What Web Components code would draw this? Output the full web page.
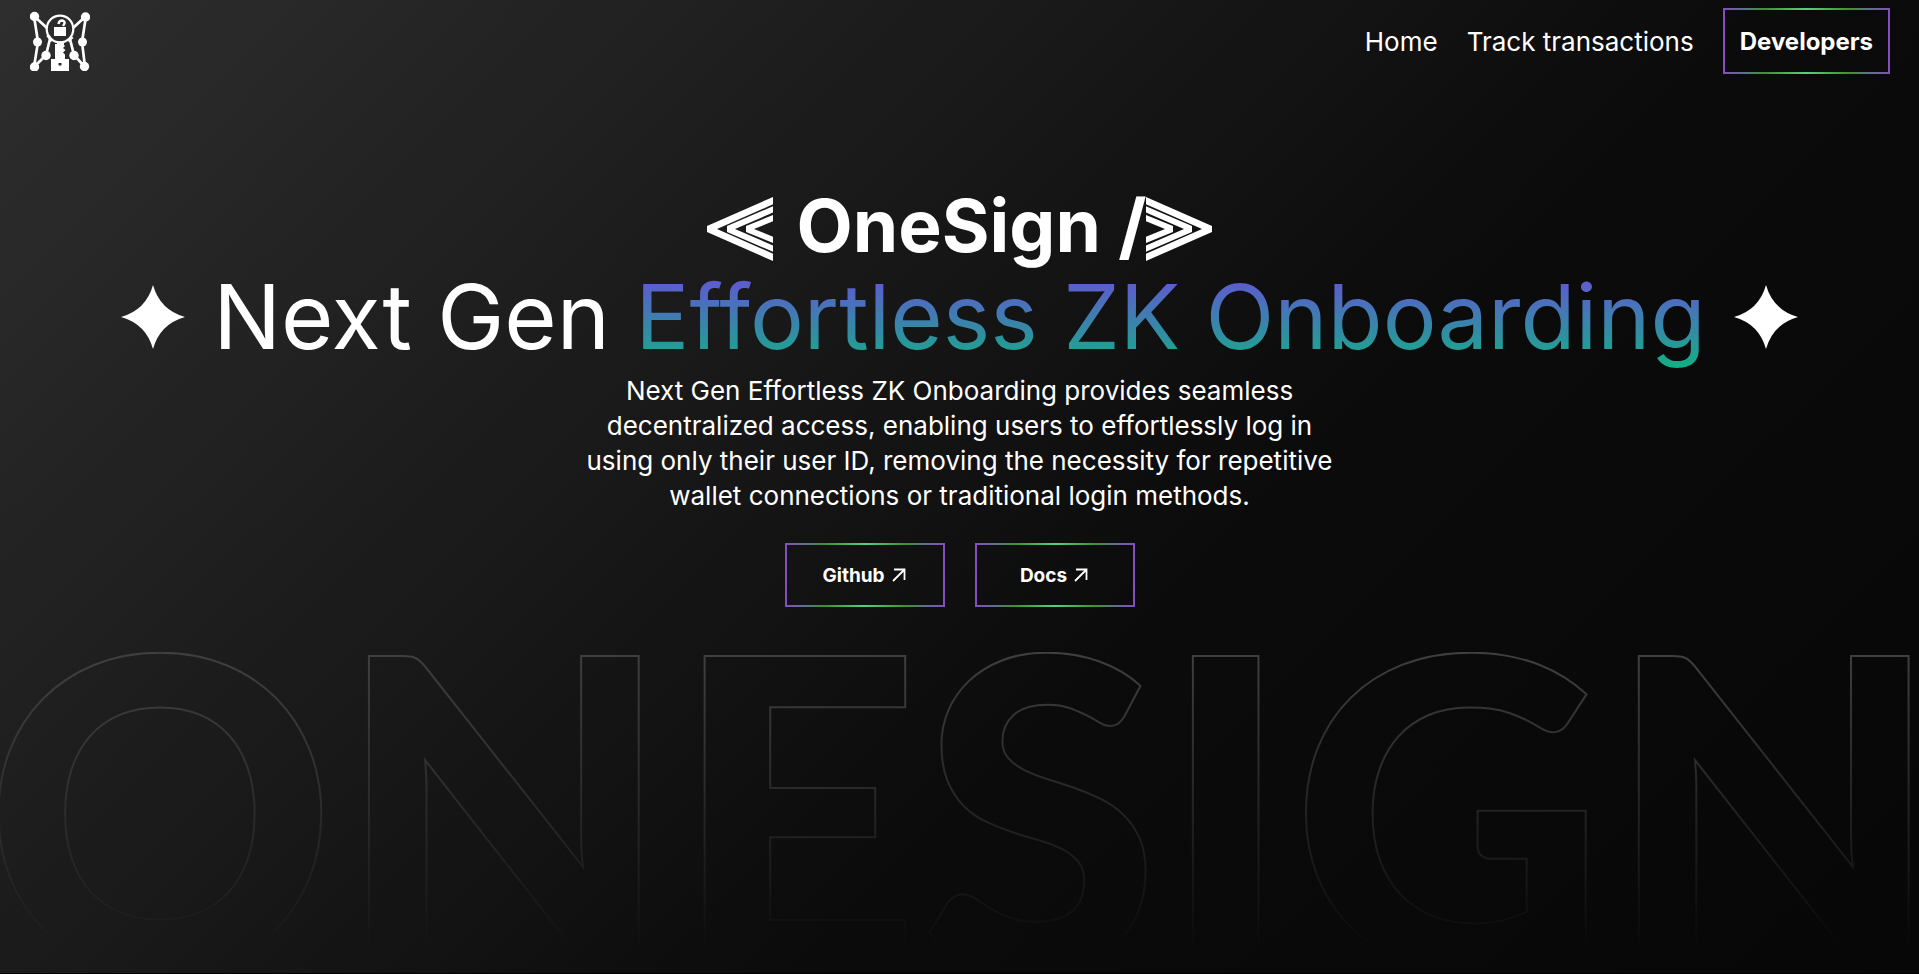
<!DOCTYPE html>
<html lang="en">
<head>
<meta charset="utf-8">
<meta name="viewport" content="width=device-width, initial-scale=1">
<title>OneSign</title>
<style>
html,body{margin:0;min-height:100%;background:#000}
body{color:#fff;font-family:Inter,"Open Sans",sans-serif}
</style>
</head>
<body>
<onesign-page></onesign-page>
<script>
const define = (name, html) => {
  const template = document.createElement('template');
  template.innerHTML = html;
  customElements.define(name, class extends HTMLElement {
    constructor() {
      super();
      this.attachShadow({ mode: 'open' }).append(template.content.cloneNode(true));
      const link = this.shadowRoot.querySelector('a[data-forward]');
      if (link) link.href = this.getAttribute('href') || '#';
    }
  });
};

define('site-logo', `
<style>:host{display:block}a{display:block}svg{display:block;width:60px;height:60px}</style>
<a href="#home" aria-label="OneSign home">
<svg viewBox="30 10 60 60" fill="#fff" stroke="#fff">
<g fill="none" stroke-width="3">
<path d="M34 15L47 27M34 15L38 41L34 66L46 54L50 38M86 15L73 27M86 15L82 41L85 66L74 54L70 38" stroke-width="2.700"/>
<circle cx="60" cy="28" r="13.300" stroke-width="2.200"/>
<path d="M47.500 34L52 40M72.500 36L68 40"/>
<path d="M58.500 23Q59 19.500 62 19.500Q65 20 64.500 22.500L63 25" stroke-width="2.400"/>
</g>
<g stroke="none">
<circle cx="34.500" cy="15.500" r="4.700"/><circle cx="85.500" cy="16" r="4.700"/>
<circle cx="37.500" cy="41" r="4.500"/><circle cx="82.500" cy="41" r="4.500"/>
<circle cx="46" cy="54.500" r="4.700"/><circle cx="74" cy="54.500" r="4.700"/>
<circle cx="34.500" cy="66" r="4.700"/><circle cx="84.500" cy="65.500" r="4.700"/>
<path d="M54 26h12v9H54z"/>
<path fill-rule="evenodd" d="M57 41.500L59 40.500H61L64 42V44L65 45L63 47L65.500 49L63 51.500L65 53.500V58H69V70H51V58H55V43H57ZM58.500 62V64.500H61.500V62Z"/>
</g></svg></a>`);

define('framed-link', `
<style>
:host{display:block}
a{display:flex;box-sizing:border-box;height:100%;align-items:center;justify-content:center;gap:6px;padding:0 15px;color:#fff;text-decoration:none;font-weight:700;
border:2px solid;border-image:linear-gradient(90deg,#864ebe 0%,#607090 12%,#40922f 25%,#53d186 50%,#40922f 75%,#607090 88%,#864ebe 100%) 1}
svg{display:none;width:16px;height:16px}
:host([external]) svg{display:block}
</style>
<a data-forward><slot></slot><svg viewBox="0 0 16 16" fill="none" stroke="#fff" stroke-width="1.800" aria-hidden="true"><path d="M2 14L13.500 2.500M3 2.500H13.500V13"/></svg></a>`);

define('site-header', `
<style>
:host{display:flex;align-items:center;justify-content:space-between;padding:8px 29px 0 30px}
nav{display:flex;align-items:center;gap:29px;font-size:24px}
nav>a{color:#fff;text-decoration:none;font-size:26px}
framed-link{height:66px}
</style>
<site-logo></site-logo>
<nav aria-label="Main"><a href="#home">Home</a><a href="#track">Track transactions</a><framed-link href="#developers">Developers</framed-link></nav>`);

define('chevron-mark', `
<style>:host{display:block;padding-top:6px}:host([flip]) svg{transform:scaleX(-1)}svg{display:block;width:66px;height:64px}</style>
<svg viewBox="0 0 66 66" preserveAspectRatio="none" fill="#fff" aria-hidden="true">
<path d="M66 0V7.500L10 33L66 58.500V66L0 36V30Z"/>
<path d="M66 9.500V16L28 33L66 50V56.500L20 36V30Z"/>
<path d="M66 18.500V25L47 33L66 41V47.500L39 36V30Z"/>
</svg>`);

define('spark-mark', `
<style>:host{display:block}svg{display:block;width:64px;height:64px}</style>
<svg viewBox="0 0 64 64" fill="#fff" aria-hidden="true"><path d="M32 0Q39 25 64 32Q39 39 32 64Q25 39 0 32Q25 25 32 0Z"/></svg>`);

define('hero-banner', `
<style>
:host{display:flex;flex-direction:column;align-items:center;text-align:center;padding-top:104px}
.brand,.headline{display:flex;align-items:center;justify-content:center;white-space:nowrap}
.brand{margin:0;font-size:73px;line-height:95px;font-weight:700}
.brand chevron-mark:first-child{margin-right:24px}
h1{margin:0;font-size:90px;line-height:88px;font-weight:400}
h1 span{background:linear-gradient(#6f48e0 0%,#12b084 96%);-webkit-background-clip:text;background-clip:text;color:transparent;padding-bottom:2px}
.headline{gap:28px}
.copy{margin:12px 0 0;font-size:26px;line-height:35px}
.actions{display:flex;gap:30px;margin-top:30px;font-size:19px}
.actions framed-link{width:160px;height:64px}
</style>
<p class="brand"><chevron-mark></chevron-mark>OneSign /<chevron-mark flip></chevron-mark></p>
<div class="headline"><spark-mark></spark-mark><h1>Next Gen <span>Effortless ZK Onboarding</span></h1><spark-mark></spark-mark></div>
<p class="copy">Next Gen Effortless ZK Onboarding provides seamless<br>decentralized access, enabling users to effortlessly log in<br>using only their user ID, removing the necessity for repetitive<br>wallet connections or traditional login methods.</p>
<div class="actions"><framed-link href="#github" external>Github</framed-link><framed-link href="#docs" external>Docs</framed-link></div>`);

define('outline-wordmark', `
<style>
:host{display:block;overflow:hidden;-webkit-mask-image:linear-gradient(#000,transparent 94%);mask-image:linear-gradient(#000,transparent 94%)}
div{margin-left:-16px;font-family:Lato,Inter,sans-serif;font-size:434px;line-height:302px;font-weight:900;white-space:nowrap;color:transparent;-webkit-text-stroke:2px #404040}
</style>
<div>ONESIGN</div>`);

define('onesign-page', `
<style>
:host{display:flex;flex-direction:column;box-sizing:border-box;min-height:calc(100vh - 1px);background:linear-gradient(135deg,#2e2e2e 0%,#0b0b0b 61%,#070707 100%)}
outline-wordmark{margin-top:45px;height:321px}
</style>
<site-header></site-header>
<main><hero-banner></hero-banner></main>
<outline-wordmark></outline-wordmark>`);
</script>
</body>
</html>
